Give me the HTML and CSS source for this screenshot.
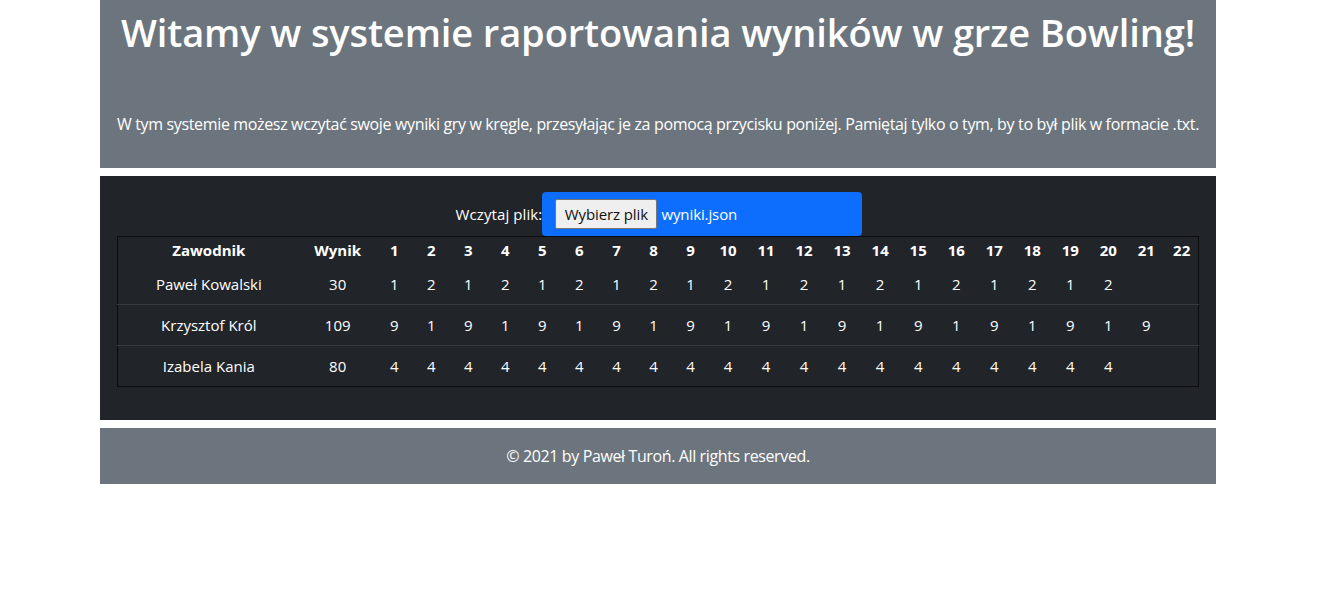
FILE: index.html
```html
<!DOCTYPE html>
<html lang="pl">
<head>
<meta charset="utf-8">
<title>Bowling</title>
<link rel="stylesheet" href="styles.css">
</head>
<body>
<div class="container">
  <header class="hero">
    <h1 class="hero-title">Witamy w systemie raportowania wyników w grze Bowling!</h1>
    <p class="hero-text">W tym systemie możesz wczytać swoje wyniki gry w kręgle, przesyłając je za pomocą przycisku poniżej. Pamiętaj tylko o tym, by to był plik w formacie .txt.</p>
  </header>

  <main class="panel">
    <div class="upload">
      <label class="upload-label">Wczytaj plik:</label>
      <div class="file-box">
        <span class="file-btn">Wybierz plik</span>
        <span class="file-name">wyniki.json</span>
      </div>
    </div>

    <table class="scores">
      <colgroup>
        <col class="c-name"><col class="c-score">
        <col class="c-s"><col class="c-s"><col class="c-s"><col class="c-s"><col class="c-s"><col class="c-s"><col class="c-s"><col class="c-s"><col class="c-s">
        <col class="c-m"><col class="c-m"><col class="c-m"><col class="c-m"><col class="c-m"><col class="c-m"><col class="c-m"><col class="c-m"><col class="c-m"><col class="c-m"><col class="c-m"><col class="c-m">
        <col class="c-l">
      </colgroup>
      <thead>
        <tr>
          <th>Zawodnik</th><th>Wynik</th>
          <th>1</th><th>2</th><th>3</th><th>4</th><th>5</th><th>6</th><th>7</th><th>8</th><th>9</th><th>10</th><th>11</th><th>12</th><th>13</th><th>14</th><th>15</th><th>16</th><th>17</th><th>18</th><th>19</th><th>20</th><th>21</th><th>22</th>
        </tr>
      </thead>
      <tbody>
        <tr>
          <td>Paweł Kowalski</td><td>30</td>
          <td>1</td><td>2</td><td>1</td><td>2</td><td>1</td><td>2</td><td>1</td><td>2</td><td>1</td><td>2</td><td>1</td><td>2</td><td>1</td><td>2</td><td>1</td><td>2</td><td>1</td><td>2</td><td>1</td><td>2</td><td></td><td></td>
        </tr>
        <tr>
          <td>Krzysztof Król</td><td>109</td>
          <td>9</td><td>1</td><td>9</td><td>1</td><td>9</td><td>1</td><td>9</td><td>1</td><td>9</td><td>1</td><td>9</td><td>1</td><td>9</td><td>1</td><td>9</td><td>1</td><td>9</td><td>1</td><td>9</td><td>1</td><td>9</td><td></td>
        </tr>
        <tr>
          <td>Izabela Kania</td><td>80</td>
          <td>4</td><td>4</td><td>4</td><td>4</td><td>4</td><td>4</td><td>4</td><td>4</td><td>4</td><td>4</td><td>4</td><td>4</td><td>4</td><td>4</td><td>4</td><td>4</td><td>4</td><td>4</td><td>4</td><td>4</td><td></td><td></td>
        </tr>
      </tbody>
    </table>
  </main>

  <footer class="foot">© 2021 by Paweł Turoń. All rights reserved.</footer>
</div>
</body>
</html>
```

FILE: styles.css
```css
* { box-sizing: border-box; }

body {
  margin: 0;
  background: #fff;
  font-family: "Open Sans", "Noto Sans", "DejaVu Sans", sans-serif;
  font-size: 16px;
  line-height: 1.5;
  color: #fff;
}

.container {
  width: 1116px;
  margin-left: calc(50% - 558.5px);
  display: flex;
  flex-direction: column;
  gap: 8px;
}

.hero {
  background: #6c757d;
  height: 168px;
  padding-top: 8px;
  text-align: center;
}

.hero-title {
  margin: 0;
  font-size: 38px;
  line-height: 48px;
  font-weight: 600;
  letter-spacing: -0.1px;
}

.hero-text {
  margin: 56px 0 0;
  font-size: 16px;
  line-height: 24px;
  letter-spacing: -0.35px;
}

.panel {
  background: #212529;
  padding: 16px 17px 33px;
}

.upload {
  display: flex;
  justify-content: center;
  align-items: center;
  padding-left: 2px;
}

.upload-label {
  font-size: 15px;
  letter-spacing: 0.1px;
}

.file-box {
  width: 320px;
  height: 44px;
  background: #0d6efd;
  border-radius: 4px;
  display: flex;
  align-items: center;
  padding-left: 13px;
  gap: 4px;
}

.file-btn {
  width: 102px;
  height: 30px;
  background: #efefef;
  border: 1px solid #767676;
  border-radius: 2px;
  color: #111;
  font-size: 15px;
  display: flex;
  align-items: center;
  justify-content: center;
  letter-spacing: -0.1px;
}

.file-name {
  font-size: 15px;
  letter-spacing: -0.1px;
}

.scores {
  width: 1082px;
  border-collapse: collapse;
  table-layout: fixed;
  border: 1px solid #0b0c0d;
}

.c-name { width: 182px; }
.c-score { width: 76px; }
.c-s { width: 37px; }
.c-m { width: 38px; }
.c-l { width: 33px; }

.scores th,
.scores td {
  padding: 0;
  text-align: center;
  font-size: 15px;
  white-space: nowrap;
}

.scores th {
  height: 27px;
  font-weight: 700;
  vertical-align: middle;
}

.scores td {
  height: 41px;
  vertical-align: middle;
}

.scores tbody tr + tr td {
  border-top: 1px solid #373b3e;
}

.foot {
  background: #6c757d;
  height: 56px;
  display: flex;
  align-items: center;
  justify-content: center;
  font-size: 16px;
  letter-spacing: -0.38px;
}
```
